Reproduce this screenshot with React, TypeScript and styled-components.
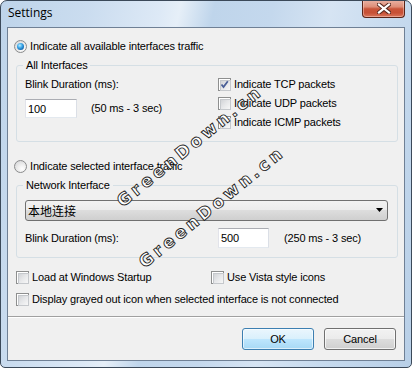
import React from 'react';
import styled, { createGlobalStyle, css } from 'styled-components';

const Global = createGlobalStyle`
  html, body { margin: 0; padding: 0; background: #ffffff; }
  body { font-family: "Liberation Sans", Arial, sans-serif; font-size: 11px; letter-spacing: -0.15px; color: #000; }
  * { box-sizing: border-box; }
`;

const Window = styled.div`
  position: relative;
  width: 412px;
  height: 368px;
  border: 1px solid #3b4959;
  border-radius: 7px 7px 5px 5px;
  padding: 0 6px 6px 6px;
  display: flex;
  flex-direction: column;
  overflow: hidden;
  background: linear-gradient(102deg, #bed4ea 0%, #cadcef 18%, #dde9f6 33%, #e6eff8 37%, #bfd5eb 44%, #c4d8ed 56%, #d6e4f3 68%, #c6daee 82%, #b8cfe7 100%);
`;

const TitleBar = styled.div`
  height: 26px;
  display: flex;
  justify-content: space-between;
  align-items: flex-start;
  flex: none;
`;

const Title = styled.div`
  font-family: "Open Sans", "Noto Sans", sans-serif;
  font-size: 12px;
  letter-spacing: 0;
  line-height: 16px;
  padding: 4px 0 0 1px;
  color: #000;
`;

const CloseButton = styled.div`
  width: 43px;
  height: 18px;
  margin-top: -1px;
  border: 1px solid #5a2418;
  border-top: none;
  border-radius: 0 0 4px 4px;
  background: linear-gradient(#eab3a5 0%, #de8e78 40%, #c9553a 52%, #c75035 75%, #d9765c 100%);
  box-shadow: inset 0 0 0 1px rgba(255, 220, 210, 0.45);
  display: flex;
  align-items: center;
  justify-content: center;
`;

const Client = styled.div`
  flex: 1;
  border: 1px solid #6f8095;
  background: #f0f0f0;
  display: flex;
  flex-direction: column;
`;

const OptionRow = styled.label<{ $top: number; $left: number }>`
  display: flex;
  align-items: center;
  gap: 3px;
  height: 13px;
  line-height: 13px;
  margin-top: ${p => p.$top}px;
  margin-left: ${p => p.$left}px;
  white-space: nowrap;
`;

const Radio = styled.span<{ $checked?: boolean }>`
  position: relative;
  flex: none;
  width: 13px;
  height: 13px;
  border-radius: 50%;
  border: 1px solid #8a8b8c;
  background: radial-gradient(circle at 65% 70%, #ffffff 0%, #eeeeee 40%, #cfd0d2 100%);
  ${p => p.$checked && css`
    &::after {
      content: '';
      position: absolute;
      left: 2px;
      top: 2px;
      width: 7px;
      height: 7px;
      border-radius: 50%;
      background: radial-gradient(circle at 40% 35%, #bdeeff 0%, #3aa6e8 40%, #0f5aa3 80%, #0a3f78 100%);
    }
  `}
`;

const Check = styled.span`
  position: relative;
  flex: none;
  width: 13px;
  height: 13px;
  border: 1px solid #8e8f8f;
  background: #fff;
  &::before {
    content: '';
    position: absolute;
    left: 1px;
    top: 1px;
    width: 9px;
    height: 9px;
    border: 1px solid #c5c8cc;
    background: linear-gradient(135deg, #d2d4d7 0%, #e7e8ea 50%, #f7f7f7 100%);
  }
`;

const CheckMark = styled.svg`
  position: absolute;
  left: 1px;
  top: 1px;
`;

const Group = styled.div<{ $top: number; $h: number }>`
  position: relative;
  margin: ${p => p.$top}px 6px 0 8px;
  height: ${p => p.$h}px;
  border: 1px solid #d5dfe5;
  border-radius: 3px;
`;

const Legend = styled.span`
  position: absolute;
  left: 6px;
  top: -7px;
  padding: 0 3px;
  line-height: 13px;
  background: #f0f0f0;
  white-space: nowrap;
`;

const GroupGrid = styled.div`
  display: grid;
  grid-template-columns: 193px 1fr;
  padding: 12px 0 0 8px;
`;

const Column = styled.div`
  display: flex;
  flex-direction: column;
`;

const CheckList = styled.div`
  display: flex;
  flex-direction: column;
  gap: 6px;
`;

const Text = styled.span`
  line-height: 13px;
  white-space: nowrap;
`;

const FieldRow = styled.div<{ $gap: number; $top: number }>`
  display: flex;
  align-items: center;
  gap: ${p => p.$gap}px;
  margin-top: ${p => p.$top}px;
`;

const TextBox = styled.div<{ $w: number; $h: number }>`
  width: ${p => p.$w}px;
  height: ${p => p.$h}px;
  border: 1px solid;
  border-color: #abadb3 #dbdfe6 #e3e9ef #e2e3ea;
  background: #fff;
  padding-left: 2px;
  display: flex;
  align-items: center;
  flex: none;
`;

const GroupBody = styled.div`
  display: flex;
  flex-direction: column;
  padding: 14px 0 0 8px;
`;

const Combo = styled.div`
  width: 363px;
  height: 21px;
  border: 1px solid #707070;
  border-radius: 3px;
  background: linear-gradient(#f2f2f2 0%, #ebebeb 50%, #dddddd 50%, #cfcfcf 100%);
  display: flex;
  align-items: center;
  justify-content: space-between;
  padding: 0 3px 0 2px;
  font-family: "Noto Sans CJK SC", "Liberation Sans", sans-serif;
  font-size: 12px;
  letter-spacing: 0;
`;

const BlinkRow = styled.div`
  display: grid;
  grid-template-columns: 193px auto 1fr;
  align-items: center;
  margin-top: 7px;
`;

const RangeText = styled.span`
  line-height: 13px;
  white-space: nowrap;
  padding-left: 15px;
`;

const OptionsGrid = styled.div`
  display: grid;
  grid-template-columns: 195px 1fr;
  margin: 13px 0 0 8px;
`;

const Separator = styled.div`
  margin-top: 10px;
  height: 2px;
  border-top: 1px solid #a0a0a0;
  border-bottom: 1px solid #ffffff;
`;

const ButtonBar = styled.div`
  display: flex;
  justify-content: flex-end;
  gap: 10px;
  margin-top: 10px;
  padding-right: 8px;
`;

const Button = styled.div<{ $default?: boolean }>`
  width: 72px;
  height: 22px;
  border-radius: 3px;
  display: flex;
  align-items: center;
  justify-content: center;
  border: 1px solid #707070;
  background: linear-gradient(#f2f2f2 0%, #ebebeb 50%, #dddddd 50%, #cfcfcf 100%);
  box-shadow: inset 0 0 0 1px rgba(255, 255, 255, 0.7);
  ${p => p.$default && css`
    border-color: #3c7fb1;
    background: linear-gradient(#eaf6fd 0%, #d9f0fc 50%, #bee6fd 50%, #a7d9f5 100%);
    box-shadow: inset 0 0 0 1px rgba(255, 255, 255, 0.6);
  `}
`;

const Watermark = styled.div<{ $x: number; $y: number }>`
  position: absolute;
  left: ${p => p.$x}px;
  top: ${p => p.$y}px;
  transform: rotate(-39deg);
  transform-origin: 0 50%;
  font-family: "DejaVu Sans", sans-serif;
  font-weight: bold;
  font-size: 17px;
  letter-spacing: 3.5px;
  line-height: 18px;
  color: #ffffff;
  -webkit-text-stroke: 0.9px #1e1e1e;
  white-space: nowrap;
  pointer-events: none;
`;

const CloseIcon = () => (
  <svg width="14" height="11" viewBox="0 0 14 11">
    <path d="M2 1.5 L12 9.5 M12 1.5 L2 9.5" stroke="#5a2a20" strokeWidth="4.2" strokeLinecap="square" />
    <path d="M2 1.5 L12 9.5 M12 1.5 L2 9.5" stroke="#ffffff" strokeWidth="2.2" strokeLinecap="square" />
  </svg>
);

const CheckBox = ({ checked }: { checked?: boolean }) => (
  <Check>
    {checked && (
      <CheckMark width="9" height="9" viewBox="0 0 9 9">
        <path d="M1.5 4.5 L3.5 7 L7.8 1.2" fill="none" stroke="#4a5f97" strokeWidth="1.8" />
      </CheckMark>
    )}
  </Check>
);

const Arrow = () => (
  <svg width="8" height="5" viewBox="0 0 8 5">
    <path d="M0 0 H7 L3.5 4 Z" fill="#000" />
  </svg>
);

export default function App() {
  return (
    <>
      <Global />
      <Window>
        <TitleBar>
          <Title>Settings</Title>
          <CloseButton><CloseIcon /></CloseButton>
        </TitleBar>
        <Client>
          <OptionRow $top={12} $left={6}>
            <Radio $checked />
            <Text>Indicate all available interfaces traffic</Text>
          </OptionRow>

          <Group $top={12} $h={77}>
            <Legend>All Interfaces</Legend>
            <GroupGrid>
              <Column>
                <Text>Blink Duration (ms):</Text>
                <FieldRow $gap={14} $top={8}>
                  <TextBox $w={52} $h={19}>100</TextBox>
                  <Text>(50 ms - 3 sec)</Text>
                </FieldRow>
              </Column>
              <CheckList>
                <OptionRow $top={0} $left={0}>
                  <CheckBox checked />
                  <Text>Indicate TCP packets</Text>
                </OptionRow>
                <OptionRow $top={0} $left={0}>
                  <CheckBox />
                  <Text>Indicate UDP packets</Text>
                </OptionRow>
                <OptionRow $top={0} $left={0}>
                  <CheckBox />
                  <Text>Indicate ICMP packets</Text>
                </OptionRow>
              </CheckList>
            </GroupGrid>
          </Group>

          <OptionRow $top={18} $left={6}>
            <Radio />
            <Text>Indicate selected interface traffic</Text>
          </OptionRow>

          <Group $top={12} $h={73}>
            <Legend>Network Interface</Legend>
            <GroupBody>
              <Combo>
                <span>本地连接</span>
                <Arrow />
              </Combo>
              <BlinkRow>
                <Text>Blink Duration (ms):</Text>
                <TextBox $w={51} $h={20}>500</TextBox>
                <RangeText>(250 ms - 3 sec)</RangeText>
              </BlinkRow>
            </GroupBody>
          </Group>

          <OptionsGrid>
            <OptionRow $top={0} $left={0}>
              <CheckBox />
              <Text>Load at Windows Startup</Text>
            </OptionRow>
            <OptionRow $top={0} $left={0}>
              <CheckBox />
              <Text>Use Vista style icons</Text>
            </OptionRow>
          </OptionsGrid>
          <OptionRow $top={9} $left={8}>
            <CheckBox />
            <Text>Display grayed out icon when selected interface is not connected</Text>
          </OptionRow>

          <Separator />
          <ButtonBar>
            <Button $default>OK</Button>
            <Button>Cancel</Button>
          </ButtonBar>
        </Client>
        <Watermark $x={118} $y={193}>GreenDown.cn</Watermark>
        <Watermark $x={140} $y={254}>GreenDown.cn</Watermark>
      </Window>
    </>
  );
}
